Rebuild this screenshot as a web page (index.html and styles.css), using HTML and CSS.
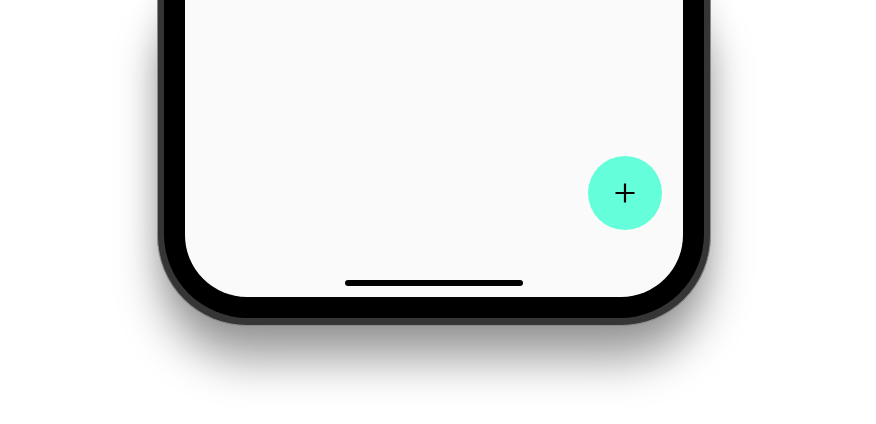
FILE: index.html
```html
<!DOCTYPE html>
<html lang="en">
<head>
<meta charset="utf-8">
<title>Phone</title>
<link rel="stylesheet" href="styles.css">
</head>
<body>
<div class="stage">
  <div class="phone">
    <div class="bezel">
      <div class="screen">
        <div class="fab-row">
          <button class="fab" aria-label="Add">
            <svg width="20" height="20" viewBox="0 0 20 20"><path d="M10 0.5V19.5M0.5 10H19.5" stroke="#000" stroke-width="2.2" fill="none"/></svg>
          </button>
        </div>
        <div class="home-bar"></div>
      </div>
    </div>
  </div>
</div>
</body>
</html>
```
FILE: styles.css
```css
html, body {
  margin: 0;
  padding: 0;
  background: #ffffff;
  overflow: hidden;
}
.stage {
  width: 876px;
  height: 424px;
  padding-left: 157px;
  box-sizing: border-box;
}
.phone {
  width: 554px;
  box-sizing: border-box;
  background: #353535;
  padding: 0 6px 7px 6px;
  border: 1px solid #8a8a8a;
  border-top: none;
  border-radius: 0 0 90px 90px;
  box-shadow: 0 38px 45px -4px rgba(0, 0, 0, 0.38), 0 0 28px rgba(0, 0, 0, 0.12);
}
.bezel {
  background: #000;
  padding: 0 21px 21px 21px;
  border-radius: 0 0 84px 84px;
}
.screen {
  height: 297px;
  background: #fafafa;
  border-radius: 0 0 62px 62px;
  display: flex;
  flex-direction: column;
  justify-content: flex-end;
  align-items: stretch;
}
.fab-row {
  display: flex;
  justify-content: flex-end;
  padding-right: 21px;
  margin-bottom: 50px;
}
.fab {
  width: 74px;
  height: 74px;
  border-radius: 50%;
  border: none;
  padding: 0;
  background: #64ffda;
  display: flex;
  align-items: center;
  justify-content: center;
}
.fab svg { display: block; }
.home-bar {
  align-self: center;
  width: 178px;
  height: 6px;
  border-radius: 3px;
  background: #000;
  margin-bottom: 11px;
}
```
